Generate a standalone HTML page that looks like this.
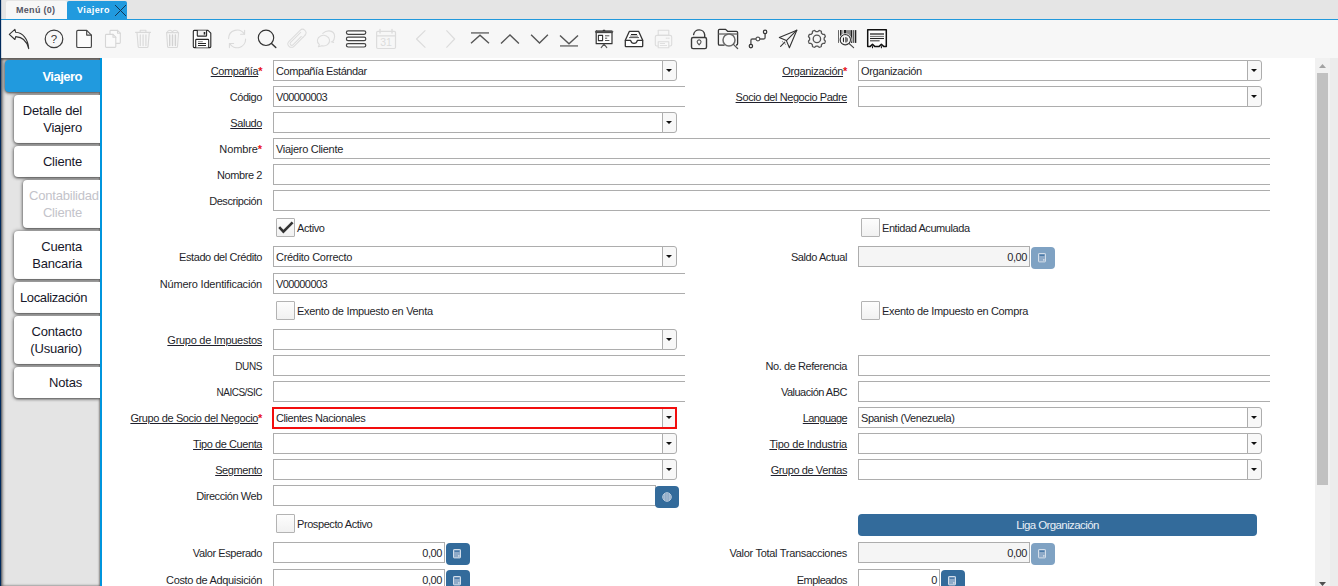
<!DOCTYPE html><html lang="es"><head><meta charset="utf-8"><title>Viajero</title><style>
*{box-sizing:border-box;margin:0;padding:0}
html,body{width:1338px;height:586px;overflow:hidden;background:#fff}
body{position:relative;font-family:"Liberation Sans","DejaVu Sans",sans-serif;font-size:11px;color:#1f1f2b;letter-spacing:-0.42px}
.abs{position:absolute}
#lstrip{left:0;top:0;width:1px;height:586px;background:#002a5c}
#lstrip2{left:1px;top:0;width:1px;height:586px;background:rgba(0,42,92,.15)}
#tabbar{left:1px;top:0;width:1337px;height:19px;background:#e5e5e5}
#tabline{left:1px;top:19px;width:1337px;height:1px;background:#2199dc}
#tab1{left:6px;top:1px;width:61px;height:18px;background:#f7f7f7;border-radius:2px 2px 0 0;font-weight:bold;font-size:9px;color:#555564;line-height:18px;padding-left:10px;letter-spacing:0.3px}
#tab2{left:67px;top:1px;width:60px;height:19px;background:#219ade;border-radius:2px 2px 0 0;font-weight:bold;font-size:9px;color:#fff;line-height:18px;padding-left:10px;letter-spacing:0.45px}
#toolbar{left:1px;top:20px;width:1337px;height:38px;background:#f7f7f7}
#side{left:1px;top:58px;width:99px;height:528px;background:#e4e4e4;overflow:hidden}
#sideshadow{left:0;top:0;width:99px;height:528px;box-shadow:inset 0 2px 2px rgba(70,60,55,.6), inset 2px 0 3px rgba(0,0,0,.45), inset -1px 0 2px rgba(0,0,0,.3);pointer-events:none}
#sideborder{left:100px;top:58px;width:2px;height:528px;background:#0095dd}
.stab{position:absolute;background:#fff;border-radius:4px 0 0 4px;box-shadow:0 1px 3px rgba(0,0,0,.58), 0 0 4px rgba(0,0,0,.4);font-size:13px;letter-spacing:-0.2px;text-align:right;padding-right:18px;padding-left:6px;white-space:nowrap;overflow:hidden;line-height:17px;color:#17172a}
.stab.sel{background:#219ade;color:#fff;font-weight:bold;font-size:13px;letter-spacing:-0.5px}
.stab.dis{color:#c3c3ca}
.lbl{position:absolute;text-align:right;white-space:nowrap;line-height:14px;height:14px}
.lbl u{text-decoration:underline;text-underline-offset:1px}
.req{color:#e8111a;font-weight:bold}
.fld{position:absolute;height:21px;border:1px solid #adadad;background:#fff;line-height:19px;padding-top:1px;padding-left:2px;white-space:nowrap;overflow:hidden}
.fld.nr{border-right:none}
.fld.ro{background:#f5f5f5}
.fld.num{text-align:right;padding-right:2px}
.cbtn{position:absolute;width:15px;height:21px;border:1px solid #adadad;background:#f8f8f8;border-radius:0 3px 3px 0}
.cbtn:after{content:"";position:absolute;left:3px;top:8px;border-left:3px solid transparent;border-right:3px solid transparent;border-top:3px solid #111;width:0;height:0}
.chk{position:absolute;width:19px;height:19px;border:1px solid #b3b3b3;background:linear-gradient(#fdfdfd,#f1f1f1);border-radius:1px}
.ctxt{position:absolute;white-space:nowrap;line-height:14px}
.bbtn{position:absolute;width:24px;height:22px;background:#336b9b;border-radius:4px}
.bbtn.dis{background:#7fa2c3}
</style></head><body>
<div class="abs" id="tabbar"></div><div class="abs" id="tabline"></div>
<div class="abs" id="tab1">Menú (0)</div>
<div class="abs" id="tab2">Viajero<svg class="abs" style="left:47px;top:3px" width="13" height="13" viewBox="0 0 13 13"><path d="M1 1L12 12M12 1L1 12" stroke="#14324d" stroke-width="0.95" fill="none"/></svg></div>
<div class="abs" id="toolbar"></div>
<svg class="abs" style="left:0;top:20px" width="1338" height="38" viewBox="0 20 1338 38" fill="none" stroke-linecap="round" stroke-linejoin="round">
<!-- undo -->
<path d="M9.3 34.3L14.9 29.3L15.7 32.3C22.5 32.6 28 38.5 28.7 48.6C27 41.2 22.3 36.9 15.7 36.6L14.9 39.5Z" stroke="#333" stroke-width="1.1"/>
<!-- help -->
<circle cx="54" cy="38.9" r="8.8" stroke="#3a3a3a" stroke-width="1.2"/>
<text x="54" y="43" text-anchor="middle" font-family="Liberation Sans, sans-serif" font-size="11.5" fill="#333" stroke="none" letter-spacing="0">?</text>
<!-- new doc -->
<path d="M78 30.3H86.7L91.4 35.1V46.2Q91.4 47.5 90.1 47.5H78Q76.7 47.5 76.7 46.2V31.6Q76.7 30.3 78 30.3Z" fill="#fcfcfc" stroke="#444" stroke-width="1.15"/>
<path d="M86.7 30.5V35.1H91.3" stroke="#444" stroke-width="1.15"/>
<!-- copy (disabled) -->
<g stroke="#d6d6d6" stroke-width="1.1" fill="#fafafa">
<path d="M110.8 30.4H117.5L120.3 33.2V42.6Q120.3 43.4 119.5 43.4H110.8Q110 43.4 110 42.6V31.2Q110 30.4 110.8 30.4Z"/>
<path d="M117.5 30.4V33.2H120.3" fill="none"/>
<path d="M106.3 34.4H113L115.8 37.2V46.6Q115.8 47.4 115 47.4H106.3Q105.5 47.4 105.5 46.6V35.2Q105.5 34.4 106.3 34.4Z"/>
<path d="M113 34.4V37.2H115.8" fill="none"/>
</g>
<!-- trash 1 (disabled) -->
<g stroke="#d9d9d9" stroke-width="1.1">
<path d="M135.6 32.4H150.5M140.2 32.2V30.2H145.9V32.2M137 32.6L138.2 46.6Q138.3 47.5 139.2 47.5H147Q147.9 47.5 148 46.6L149.3 32.6"/>
<path d="M140.3 35V45.5M143.1 35V45.5M145.9 35V45.5" stroke-width="1.4" stroke="#dedede"/>
</g>
<!-- trash 2 (disabled) -->
<g stroke="#d9d9d9" stroke-width="1.1">
<path d="M166.6 32.6L167.6 46.6Q167.7 47.5 168.6 47.5H176.5Q177.4 47.5 177.5 46.6L178.6 32.6Z"/>
<path d="M167 32.4Q168 30 170.2 30.2Q172 30.4 172.5 32Q173.2 30.2 175 30.2Q177.4 30.2 178.2 32.4"/>
<path d="M169.7 35V45.5M172.5 35V45.5M175.4 35V45.5" stroke-width="1.4" stroke="#d2d2d2"/>
</g>
<!-- save -->
<g stroke="#262626" stroke-width="1.1">
<path d="M194.3 30.4H208L210.8 33.2V46.6Q210.8 47.6 209.8 47.6H194.3Q193.3 47.6 193.3 46.6V31.4Q193.3 30.4 194.3 30.4Z" fill="#fff"/>
<path d="M197.3 30.6V35.4Q197.3 36.1 198 36.1H205.9Q206.6 36.1 206.6 35.4V30.6" fill="#f2f2f2"/>
<path d="M195.7 47.4V40.2Q195.7 39.4 196.5 39.4H207.9Q208.7 39.4 208.7 40.2V47.4" fill="#fff"/>
<path d="M204.5 32V34.6" stroke-width="1.6" stroke-linecap="butt"/>
<path d="M198 41.7H202.8" stroke="#8a8a8a" stroke-width="1" stroke-linecap="butt"/>
<path d="M198 43.5H206M198 45.5H206" stroke-width="1" stroke-linecap="butt"/>
</g>
<!-- refresh (disabled) -->
<g stroke="#dadada" stroke-width="1.1">
<path d="M228.6 38.6A8.5 8.5 0 0 1 244.4 34.2"/><path d="M244.6 30.4V34.3H240.6"/>
<path d="M245.6 39A8.5 8.5 0 0 1 229.8 43.6"/><path d="M229.4 47.6V43.5H233.6"/>
</g>
<!-- search -->
<circle cx="266" cy="37.8" r="7.7" stroke="#333" stroke-width="1.15"/>
<path d="M271.5 43.4L275.8 47.6" stroke="#333" stroke-width="1.4"/>
<!-- paperclip (disabled) -->
<g stroke="#dcdcdc" stroke-width="1" transform="rotate(45 297 38.5)">
<path d="M300.4 33.5V46.2A3.5 3.5 0 0 1 293.4 46.2V30.5A3.4 3.4 0 0 1 300.2 30.5"/>
<path d="M298.6 34V45.8A1.7 1.7 0 0 1 295.2 45.8V31.5"/>
<path d="M300.4 33.5V30.6"/>
</g>
<!-- chat (disabled) -->
<g stroke="#dcdcdc" stroke-width="1.1">
<path d="M319.4 44.6A6.1 5.3 0 1 1 322 45.8L318.4 46.8Z"/>
<path d="M322.8 33.4Q325.5 30.8 329 30.9Q334.6 31.2 334.6 36.4Q334.5 39.6 332.6 41.6L333.6 42.4L331.2 41.8"/>
</g>
<!-- hamburger -->
<g stroke="#444" stroke-width="1.2" fill="#fff">
<rect x="346.4" y="30.9" width="19.4" height="3.4" rx="1.7"/>
<rect x="346.4" y="37.2" width="19.4" height="3.4" rx="1.7"/>
<rect x="346.4" y="43.6" width="19.4" height="3.4" rx="1.7"/>
</g>
<!-- calendar (disabled) -->
<g stroke="#dcdcdc" stroke-width="1.2">
<rect x="376.6" y="31.4" width="18.9" height="17.1" rx="1.2"/>
<path d="M376.8 35.9H395.3"/>
<path d="M380 29.4V33M392 29.4V33" stroke-width="1.4"/>
</g>
<text x="386" y="46" text-anchor="middle" font-family="Liberation Sans, sans-serif" font-size="10.5" fill="#dcdcdc" stroke="none" letter-spacing="0">31</text>
<!-- prev / next (disabled) -->
<path d="M425.4 30.4L416.5 39L425.4 47.6" stroke="#dcdcdc" stroke-width="1.2" stroke-linecap="butt"/>
<path d="M446.4 30.4L454.6 39L446.4 47.6" stroke="#dcdcdc" stroke-width="1.2" stroke-linecap="butt"/>
<!-- first -->
<path d="M471 32.9H489" stroke="#858585" stroke-width="1.8" stroke-linecap="butt"/>
<path d="M471 43.2L480 35.2L489 43.2" stroke="#555" stroke-width="1.4" stroke-linecap="butt" stroke-linejoin="miter"/>
<!-- up -->
<path d="M501 43.4L510 34.9L518.9 43.4" stroke="#555" stroke-width="1.4" stroke-linecap="butt" stroke-linejoin="miter"/>
<!-- down -->
<path d="M531.1 34.8L539.5 43L547.9 34.8" stroke="#555" stroke-width="1.4" stroke-linecap="butt" stroke-linejoin="miter"/>
<!-- last -->
<path d="M560 35.5L569 43.8L578 35.5" stroke="#555" stroke-width="1.4" stroke-linecap="butt" stroke-linejoin="miter"/>
<path d="M560 45.9H578" stroke="#8a8a8a" stroke-width="1.8" stroke-linecap="butt"/>
<!-- presentation -->
<g stroke="#333" stroke-width="1.2">
<rect x="596.2" y="32.4" width="15.8" height="11.3" fill="#fff"/>
<rect x="595.4" y="30.8" width="17.4" height="1.9" rx=".9" fill="#555" stroke="#444" stroke-width=".8"/>
<path d="M603.2 30.3H604.8" stroke-width="1.2"/>
<rect x="598.4" y="35.4" width="4.2" height="5.2" stroke-width="1.1"/>
<path d="M605 35.8H609.4M605 38.2H607.2M605 40.5H609.4" stroke-width="1" stroke-linecap="butt" stroke="#555"/>
<path d="M604 44.2L601.2 47.6M604 44.2L606.8 47.6" stroke="#555" stroke-width="1.1"/>
</g>
<!-- inbox -->
<g stroke="#333" stroke-width="1.3">
<path d="M625.3 40.3L629.3 31.4H638.7L642.7 40.3V46Q642.7 46.7 642 46.7H626Q625.3 46.7 625.3 46V40.3Z" fill="#fff"/>
<path d="M625.4 40.3H630.6Q631.4 43.4 634 43.4Q636.6 43.4 637.4 40.3H642.6"/>
<path d="M631 34.5H637" stroke="#222" stroke-width="1" stroke-linecap="butt"/>
<path d="M630 36.1H638" stroke="#777" stroke-width="1" stroke-linecap="butt"/>
<path d="M629 37.6H639" stroke="#555" stroke-width="1" stroke-linecap="butt"/>
</g>
<!-- printer (disabled) -->
<g stroke="#dcdcdc" stroke-width="1.1">
<rect x="658.2" y="30.3" width="10.6" height="5.1"/>
<rect x="655.3" y="35.4" width="16.4" height="10.6" rx="1.6"/>
<rect x="658.2" y="41.7" width="10.6" height="6" fill="#f9f9f9"/>
<path d="M660.2 43.5H664.6M660.2 45.5H666.6" stroke-width=".9"/>
<path d="M666.2 38.2H669.6" stroke-width="1" stroke-dasharray="1 1"/>
</g>
<!-- lock open -->
<g stroke="#3a3a3a" stroke-width="1.4">
<rect x="691.5" y="37.5" width="15" height="11.1" rx="1.6"/>
<path d="M693.6 34.6A5.6 5.6 0 0 1 704.7 34.8V37.3" />
<path d="M699.1 44.9L697.5 42.9A1.9 1.9 0 1 1 700.7 42.9Z" stroke="#555" stroke-width="1.1"/>
</g>
<!-- folder search -->
<g stroke="#333" stroke-width="1.3">
<path d="M724 45.2H719.6Q718.4 45.2 718.4 44V30.6Q718.4 29.4 719.6 29.4H725.6L727.6 31.3H736.4Q737.6 31.3 737.6 32.5V43.6Q737.6 44.8 736.6 45"/>
<path d="M718.6 34H737.4" stroke="#777" stroke-width="1.5" stroke-linecap="butt"/>
<circle cx="729" cy="40" r="6" fill="#fafafa" stroke="#6a6a6a" stroke-width="1.5"/>
<path d="M733.4 44.4L737.6 48.5" stroke="#555" stroke-width="1.3"/>
</g>
<!-- workflow -->
<g stroke="#555" stroke-width="1.4">
<path d="M750.9 44.2V40.4Q750.9 39 752.3 39H755.9M759.9 39H763.7Q765.1 39 765.1 37.6V33.8"/>
<circle cx="750.9" cy="46.1" r="1.7" stroke="#333" stroke-width="1.2"/>
<circle cx="757.9" cy="39" r="1.9" fill="#fff" stroke-width="1.2"/>
<circle cx="765.1" cy="31.9" r="1.7" stroke="#333" stroke-width="1.2"/>
</g>
<!-- paper plane -->
<g stroke="#333" stroke-width="1.1">
<path d="M796.8 30.2L779.3 37.4L786.4 40.6L789.4 47.7Z"/>
<path d="M786.4 40.6L796.8 30.2"/>
<path d="M784.8 42.2L780.6 46.4" />
<path d="M782.4 41.4L784 43.4M785.6 44.6L784.6 43" stroke-width=".7" stroke="#777"/>
</g>
<!-- gear -->
<g stroke="#555" stroke-width="1.3">
<circle cx="816.9" cy="38.9" r="3.7"/>
<path d="M825.0 42.3L824.8 42.8L824.5 43.3L823.6 43.4L822.8 43.4L822.4 43.7L822.1 44.1L821.7 44.4L821.4 44.8L821.4 45.6L821.3 46.5L820.8 46.8L820.3 47.0L819.7 47.2L819.2 47.3L818.5 46.8L817.9 46.2L817.4 46.2L816.9 46.2L816.4 46.2L815.9 46.2L815.3 46.8L814.6 47.3L814.1 47.2L813.5 47.0L813.0 46.8L812.5 46.5L812.4 45.6L812.4 44.8L812.1 44.4L811.7 44.1L811.4 43.7L811.0 43.4L810.2 43.4L809.3 43.3L809.0 42.8L808.8 42.3L808.6 41.7L808.5 41.2L809.0 40.5L809.6 39.9L809.6 39.4L809.6 38.9L809.6 38.4L809.6 37.9L809.0 37.3L808.5 36.6L808.6 36.1L808.8 35.5L809.0 35.0L809.3 34.5L810.2 34.4L811.0 34.4L811.4 34.1L811.7 33.7L812.1 33.4L812.4 33.0L812.4 32.2L812.5 31.3L813.0 31.0L813.5 30.8L814.1 30.6L814.6 30.5L815.3 31.0L815.9 31.6L816.4 31.6L816.9 31.6L817.4 31.6L817.9 31.6L818.5 31.0L819.2 30.5L819.7 30.6L820.3 30.8L820.8 31.0L821.3 31.3L821.4 32.2L821.4 33.0L821.7 33.4L822.1 33.7L822.4 34.1L822.8 34.4L823.6 34.4L824.5 34.5L824.8 35.0L825.0 35.5L825.2 36.1L825.3 36.6L824.8 37.3L824.2 37.9L824.2 38.4L824.2 38.9L824.2 39.4L824.2 39.9L824.8 40.5L825.3 41.2L825.2 41.7L825.0 42.3Z"/>
</g>
<!-- barcode search -->
<g stroke="#222" stroke-linecap="butt">
<path d="M838.5 30.1V42.9" stroke-width=".9" stroke="#555"/>
<path d="M840.8 30.1V42.9" stroke-width="1.6"/>
<path d="M842.9 30.1V42.9" stroke-width=".8" stroke="#555"/>
<path d="M845 30.1V42.9" stroke-width="2"/>
<path d="M848.5 30.1V42.9" stroke-width="5" stroke="#8a8a8a"/>
<path d="M851.6 30.1V42.9" stroke-width="1.4"/>
<path d="M853.7 30.1V42.9" stroke-width=".9"/>
<path d="M855.6 30.1V42.9" stroke-width="1.4"/>
<circle cx="845.3" cy="39.7" r="5.9" fill="#f7f7f7" stroke="#f7f7f7" stroke-width="1"/>
<path d="M843.4 36V43.4" stroke="#222" stroke-width="1.2"/>
<path d="M846.5 35.5V44" stroke="#777" stroke-width="3"/>
<circle cx="845.3" cy="39.7" r="5.1" stroke="#333" stroke-width="1.2"/>
<circle cx="845.3" cy="39.7" r="3.6" stroke="#f7f7f7" stroke-width="1.6"/>
<path d="M849.2 43.6L853.6 47.6" stroke="#444" stroke-width="1.2" stroke-linecap="round"/>
</g>
<!-- receipt -->
<g stroke="#111" stroke-width="1.5">
<path d="M867.7 29.8H886.3V46.4H883.6L881.4 44.3L879.2 46.4H874.7L872.5 44.3L870.3 46.4H867.7Z" fill="#fff" stroke-linejoin="round"/>
<path d="M872.5 46.6V47.8M881.4 46.6V47.8" stroke-width="1.1"/>
<path d="M870 34H884" stroke="#5a5a5a" stroke-width="1.7" stroke-linecap="butt"/>
<path d="M870 36.4H884" stroke="#777" stroke-width="1.1" stroke-linecap="butt"/>
<path d="M870 38.5H884" stroke="#222" stroke-width="1.1" stroke-linecap="butt"/>
<path d="M870 40.8H879.6" stroke="#444" stroke-width="1.1" stroke-linecap="butt"/>
</g>
</svg>

<div class="abs" id="side"><div class="abs" id="sideshadow"></div>
<div class="stab sel" style="top:2px;height:32px;left:4px;width:95px;padding-top:8px">Viajero</div>
<div class="stab " style="top:37px;height:48px;left:13px;width:86px;padding-top:7px">Detalle del<br>Viajero</div>
<div class="stab " style="top:88px;height:31px;left:13px;width:86px;padding-top:7px">Cliente</div>
<div class="stab dis" style="top:122px;height:48px;left:22px;width:77px;padding-top:7px">Contabilidad<br>Cliente</div>
<div class="stab " style="top:173px;height:48px;left:13px;width:86px;padding-top:7px">Cuenta<br>Bancaria</div>
<div class="stab " style="top:224px;height:31px;left:13px;width:86px;padding-top:7px"><span style="letter-spacing:-0.38px">Localización</span></div>
<div class="stab " style="top:258px;height:48px;left:13px;width:86px;padding-top:7px">Contacto<br>(Usuario)</div>
<div class="stab " style="top:309px;height:31px;left:13px;width:86px;padding-top:7px">Notas</div>
</div><div class="abs" id="sideborder"></div>
<div class="abs" id="lstrip"></div><div class="abs" id="lstrip2"></div>
<div class="lbl" style="right:1076px;top:64px"><u>Compañía</u><span class="req">*</span></div>
<div class="fld" style="left:273px;top:60px;width:390px">Compañía Estándar</div><div class="cbtn" style="left:662px;top:60px"></div>
<div class="lbl" style="right:1076px;top:90px">Código</div>
<div class="fld nr" style="letter-spacing:-0.59px;left:273px;top:86px;width:412px">V00000003</div>
<div class="lbl" style="right:1076px;top:116px"><u>Saludo</u></div>
<div class="fld" style="left:273px;top:112px;width:390px"></div><div class="cbtn" style="left:662px;top:112px"></div>
<div class="lbl" style="letter-spacing:-0.10px;right:1076px;top:142px">Nombre<span class="req">*</span></div>
<div class="fld nr" style="letter-spacing:-0.29px;left:273px;top:138px;width:997px">Viajero Cliente</div>
<div class="lbl" style="right:1076px;top:168px">Nombre 2</div>
<div class="fld nr" style="left:273px;top:164px;width:997px"></div>
<div class="lbl" style="right:1076px;top:194px">Descripción</div>
<div class="fld nr" style="left:273px;top:190px;width:997px"></div>
<div class="chk" style="left:276px;top:218px"><svg class="abs" style="left:0;top:0" width="17" height="17" viewBox="0 0 17 17"><path d="M2.2 8.2L6.4 12.6L15.6 3.4" stroke="#333" stroke-width="2.6" fill="none"/></svg></div><div class="ctxt" style="left:297px;top:221px">Activo</div>
<div class="lbl" style="right:1076px;top:250px">Estado del Crédito</div>
<div class="fld" style="letter-spacing:-0.29px;left:273px;top:246px;width:390px">Crédito Correcto</div><div class="cbtn" style="left:662px;top:246px"></div>
<div class="lbl" style="letter-spacing:-0.20px;right:1076px;top:277px">Número Identificación</div>
<div class="fld nr" style="letter-spacing:-0.59px;left:273px;top:273px;width:412px">V00000003</div>
<div class="chk" style="left:276px;top:301px"></div><div class="ctxt" style="letter-spacing:-0.32px;left:297px;top:304px">Exento de Impuesto en Venta</div>
<div class="lbl" style="letter-spacing:-0.28px;right:1076px;top:333px"><u>Grupo de Impuestos</u></div>
<div class="fld" style="left:273px;top:329px;width:390px"></div><div class="cbtn" style="left:662px;top:329px"></div>
<div class="lbl" style="font-size:10px;letter-spacing:-0.4px;padding-top:1px;right:1076px;top:359px">DUNS</div>
<div class="fld nr" style="left:273px;top:355px;width:412px"></div>
<div class="lbl" style="font-size:10px;letter-spacing:-0.5px;padding-top:1px;right:1076px;top:385px">NAICS/SIC</div>
<div class="fld nr" style="left:273px;top:381px;width:412px"></div>
<div class="lbl" style="letter-spacing:-0.38px;right:1076px;top:411px"><u>Grupo de Socio del Negocio</u><span class="req">*</span></div>
<div class="fld" style="left:273px;top:407px;width:390px">Clientes Nacionales</div><div class="cbtn" style="left:662px;top:407px"></div>
<div class="abs" style="left:272px;top:407px;width:405px;height:22px;border:2px solid #f20d0d"></div>
<div class="lbl" style="right:1076px;top:437px"><u>Tipo de Cuenta</u></div>
<div class="fld" style="left:273px;top:433px;width:390px"></div><div class="cbtn" style="left:662px;top:433px"></div>
<div class="lbl" style="right:1076px;top:463px"><u>Segmento</u></div>
<div class="fld" style="left:273px;top:459px;width:390px"></div><div class="cbtn" style="left:662px;top:459px"></div>
<div class="lbl" style="right:1076px;top:489px">Dirección Web</div>
<div class="fld" style="left:273px;top:485px;width:383px"></div>
<div class="bbtn" style="left:655px;top:486px"><svg class="abs" style="left:6.5px;top:5.5px" width="10" height="10" viewBox="0 0 10 10"><circle cx="5" cy="5" r="4.3" fill="#7f9fbe" stroke="#b9cbdd" stroke-width="1"/><path d="M0.7 5H9.3M5 0.7V9.3M2.6 1.4V8.6M7.4 1.4V8.6M1.2 3H8.8M1.2 7H8.8" stroke="#b9cbdd" stroke-width=".6" fill="none"/></svg></div>
<div class="chk" style="left:276px;top:514px"></div><div class="ctxt" style="left:297px;top:517px">Prospecto Activo</div>
<div class="lbl" style="right:1076px;top:546px">Valor Esperado</div>
<div class="fld num" style="left:273px;top:542px;width:172px">0,00</div>
<div class="bbtn" style="left:446px;top:543px"><svg class="abs" style="left:7.4px;top:5.9px" width="8" height="10" viewBox="0 0 8 10"><rect x="0.5" y="0.5" width="7" height="8.4" rx=".6" fill="#8eaac8" stroke="#d3deea" stroke-width="1"/><rect x="1.6" y="1.5" width="4.8" height="1.5" fill="#4a7aa8"/><rect x="5" y="6" width="1.6" height="1.8" fill="#c6d4e3"/></svg></div>
<div class="lbl" style="letter-spacing:-0.34px;right:1076px;top:573px">Costo de Adquisición</div>
<div class="fld num" style="left:273px;top:569px;width:172px">0,00</div>
<div class="bbtn" style="left:446px;top:570px"><svg class="abs" style="left:7.4px;top:5.9px" width="8" height="10" viewBox="0 0 8 10"><rect x="0.5" y="0.5" width="7" height="8.4" rx=".6" fill="#8eaac8" stroke="#d3deea" stroke-width="1"/><rect x="1.6" y="1.5" width="4.8" height="1.5" fill="#4a7aa8"/><rect x="5" y="6" width="1.6" height="1.8" fill="#c6d4e3"/></svg></div>
<div class="lbl" style="letter-spacing:-0.33px;right:491px;top:64px"><u>Organización</u><span class="req">*</span></div>
<div class="fld" style="letter-spacing:-0.33px;left:858px;top:60px;width:390px">Organización</div><div class="cbtn" style="left:1247px;top:60px"></div>
<div class="lbl" style="right:491px;top:90px"><u>Socio del Negocio Padre</u></div>
<div class="fld" style="left:858px;top:86px;width:390px"></div><div class="cbtn" style="left:1247px;top:86px"></div>
<div class="chk" style="left:861px;top:218px"></div><div class="ctxt" style="left:882px;top:221px">Entidad Acumulada</div>
<div class="lbl" style="right:491px;top:250px">Saldo Actual</div>
<div class="fld ro num" style="left:858px;top:246px;width:172px">0,00</div>
<div class="bbtn dis" style="left:1031px;top:247px"><svg class="abs" style="left:7.4px;top:5.9px" width="8" height="10" viewBox="0 0 8 10"><rect x="0.5" y="0.5" width="7" height="8.4" rx=".6" fill="#8eaac8" stroke="#d3deea" stroke-width="1"/><rect x="1.6" y="1.5" width="4.8" height="1.5" fill="#4a7aa8"/><rect x="5" y="6" width="1.6" height="1.8" fill="#c6d4e3"/></svg></div>
<div class="chk" style="left:861px;top:301px"></div><div class="ctxt" style="letter-spacing:-0.33px;left:882px;top:304px">Exento de Impuesto en Compra</div>
<div class="lbl" style="right:491px;top:359px">No. de Referencia</div>
<div class="fld nr" style="left:858px;top:355px;width:412px"></div>
<div class="lbl" style="letter-spacing:-0.50px;right:491px;top:385px">Valuación ABC</div>
<div class="fld nr" style="left:858px;top:381px;width:412px"></div>
<div class="lbl" style="letter-spacing:-0.59px;right:491px;top:411px"><u>Language</u></div>
<div class="fld" style="left:858px;top:407px;width:390px">Spanish (Venezuela)</div><div class="cbtn" style="left:1247px;top:407px"></div>
<div class="lbl" style="letter-spacing:-0.23px;right:491px;top:437px"><u>Tipo de Industria</u></div>
<div class="fld" style="left:858px;top:433px;width:390px"></div><div class="cbtn" style="left:1247px;top:433px"></div>
<div class="lbl" style="right:491px;top:463px"><u>Grupo de Ventas</u></div>
<div class="fld" style="left:858px;top:459px;width:390px"></div><div class="cbtn" style="left:1247px;top:459px"></div>
<div class="abs" style="left:858px;top:514px;width:399px;height:22px;background:#336b9b;border-radius:4px;color:#e9eff6;text-align:center;line-height:22px;font-size:11.5px;letter-spacing:-0.6px">Liga Organización</div>
<div class="lbl" style="letter-spacing:-0.30px;right:491px;top:546px">Valor Total Transacciones</div>
<div class="fld ro num" style="left:858px;top:542px;width:172px">0,00</div>
<div class="bbtn dis" style="left:1031px;top:543px"><svg class="abs" style="left:7.4px;top:5.9px" width="8" height="10" viewBox="0 0 8 10"><rect x="0.5" y="0.5" width="7" height="8.4" rx=".6" fill="#8eaac8" stroke="#d3deea" stroke-width="1"/><rect x="1.6" y="1.5" width="4.8" height="1.5" fill="#4a7aa8"/><rect x="5" y="6" width="1.6" height="1.8" fill="#c6d4e3"/></svg></div>
<div class="lbl" style="letter-spacing:-0.54px;right:491px;top:573px">Empleados</div>
<div class="fld num" style="left:858px;top:569px;width:82px">0</div>
<div class="bbtn" style="left:941px;top:570px"><svg class="abs" style="left:7.4px;top:5.9px" width="8" height="10" viewBox="0 0 8 10"><rect x="0.5" y="0.5" width="7" height="8.4" rx=".6" fill="#8eaac8" stroke="#d3deea" stroke-width="1"/><rect x="1.6" y="1.5" width="4.8" height="1.5" fill="#4a7aa8"/><rect x="5" y="6" width="1.6" height="1.8" fill="#c6d4e3"/></svg></div>
<div class="abs" style="left:1315px;top:58px;width:15px;height:528px;background:#f1f1f1"></div>
<div class="abs" style="left:1330px;top:58px;width:8px;height:528px;background:#ececec"></div>
<div class="abs" style="left:1317px;top:73px;width:11px;height:412px;background:#c1c1c1"></div>
<svg class="abs" style="left:1315px;top:58px" width="15" height="15" viewBox="0 0 15 15"><path d="M4 10L7.5 6L11 10Z" fill="#a3a3a3"/></svg>
<svg class="abs" style="left:1315px;top:573px" width="15" height="15" viewBox="0 0 15 15"><path d="M4 9L7.5 13L11 9Z" fill="#505050"/></svg>
</body></html>
